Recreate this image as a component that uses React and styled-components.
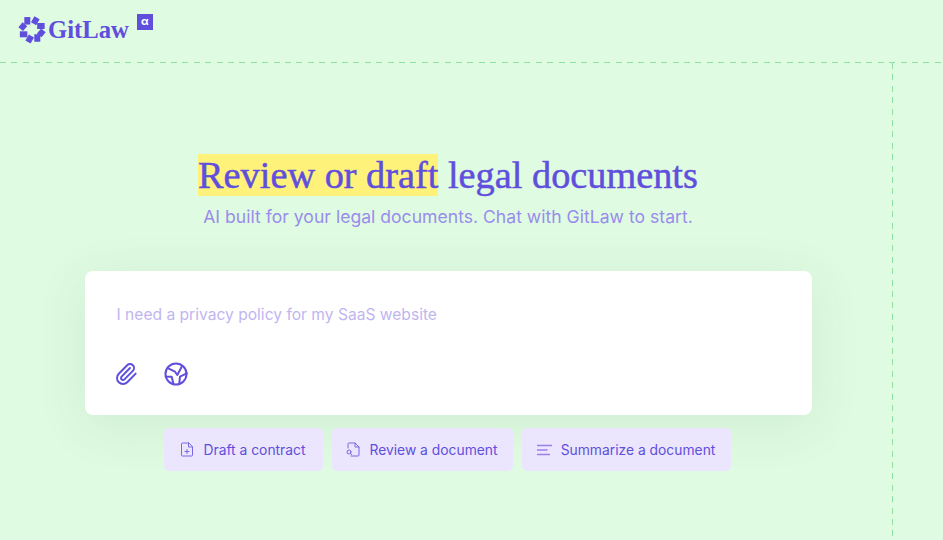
import styled, { createGlobalStyle } from "styled-components";

const GlobalStyle = createGlobalStyle`
  html, body {
    margin: 0;
    height: 100%;
    overflow: hidden;
    background: #dffbe2;
    font-family: "Inter", "Noto Sans", sans-serif;
  }
`;

const PURPLE = "#5f4fdc";

// blocks of the logo ring: centre, size, tilt
const BLOCKS = [
  [-4.7, -9.2, 6, 7.5, 0],
  [3.3, -9.2, 6, 7, 30],
  [8.9, -4, 7.5, 6, 0],
  [9.3, 2.9, 6, 6.5, 40],
  [5.3, 8, 6, 7.5, 0],
  [-2.3, 9, 6, 7, 30],
  [-8.4, 4.3, 7.5, 6, 0],
  [-9.2, -3.3, 6, 6.5, 40],
];

const LogoMark = () => (
  <svg width="28" height="28" viewBox="-14 -14 28 28" fill={PURPLE}>
    {BLOCKS.map(([x, y, w, h, r]) => (
      <rect key={`${x}${y}`} x={x - w / 2} y={y - h / 2} width={w} height={h} transform={`rotate(${r} ${x} ${y})`} />
    ))}
  </svg>
);

const ClipIcon = () => (
  <svg width="24" height="24" viewBox="0 0 24 24" fill="none" stroke={PURPLE} strokeWidth="2" strokeLinecap="round" strokeLinejoin="round">
    <path d="m16 6-8.414 8.586a2 2 0 0 0 2.829 2.829l8.414-8.586a4 4 0 1 0-5.657-5.657l-8.379 8.551a6 6 0 1 0 8.485 8.485l8.379-8.551" />
  </svg>
);

const GlobeIcon = () => (
  <svg width="24" height="24" viewBox="0 0 24 24" fill="none" stroke={PURPLE} strokeWidth="2" strokeLinecap="round" strokeLinejoin="round">
    <circle cx="12" cy="12" r="10.5" />
    <path d="M4.3 6.3 11 9.7l2.3 3.3 4.4-8.3" />
    <path d="M1.7 14.7h6l1.6 6.6" />
    <path d="m22.7 11.3-6.7 3.4-.7 6.6" />
  </svg>
);

const DraftIcon = () => (
  <svg width="14" height="15" viewBox="0 0 14 15" fill="none" stroke="#7868e4" strokeWidth="1" strokeLinecap="round" strokeLinejoin="round">
    <path d="M8.5 1H2.5a1 1 0 0 0-1 1v11a1 1 0 0 0 1 1h9a1 1 0 0 0 1-1V5z" />
    <path d="M8.5 1v4h4" />
    <path d="M7 7.5v4M5 9.5h4" />
  </svg>
);

const ReviewIcon = () => (
  <svg width="14" height="15" viewBox="0 0 14 15" fill="none" stroke="#7868e4" strokeWidth="1" strokeLinecap="round" strokeLinejoin="round">
    <path d="M2 6V2a1 1 0 0 1 1-1h6l4 4v8a1 1 0 0 1-1 1H5" />
    <path d="M9 1v4h4" />
    <circle cx="3" cy="10" r="2" />
    <path d="m4.5 11.5 1.2 1.2" />
  </svg>
);

const LinesIcon = () => (
  <svg width="15" height="12" viewBox="0 0 15 12" fill="none" stroke="#9a80ea" strokeWidth="1.4">
    <path d="M0 1.5h15M0 6h10.5M0 10.5h13" />
  </svg>
);

export default function App() {
  return (
    <>
      <GlobalStyle />
      <Page>
        <Header>
          <Logo>
            <LogoMark />
            <LogoText>GitLaw</LogoText>
            <Alpha>α</Alpha>
          </Logo>
        </Header>
        <Body>
          <Main>
            <Title>
              <Mark>Review or draft</Mark> legal documents
            </Title>
            <Subtitle>AI built for your legal documents. Chat with GitLaw to start.</Subtitle>
            <Card>
              <Prompt>I need a privacy policy for my SaaS website</Prompt>
              <Tools>
                <ClipIcon />
                <GlobeIcon />
              </Tools>
            </Card>
            <Chips>
              <Chip $width={159}><DraftIcon />Draft a contract</Chip>
              <Chip $width={181}><ReviewIcon />Review a document</Chip>
              <Chip $width={209}><LinesIcon />Summarize a document</Chip>
            </Chips>
          </Main>
        </Body>
      </Page>
    </>
  );
}

const Page = styled.div`
  display: flex;
  flex-direction: column;
  height: 540px;
  width: 943px;
  background: #dffbe2;
`;
const Header = styled.header`
  height: 63px;
  padding: 16px 0 0 18px;
  box-sizing: border-box;
  background: repeating-linear-gradient(90deg, #8fe0a2 0 6px, transparent 6px 11.4px) bottom left / 100% 1px no-repeat;
`;
const Logo = styled.div`
  display: flex;
  align-items: flex-start;
`;
const LogoText = styled.span`
  margin: 1px 0 0 2px;
  font-family: "Liberation Serif", serif;
  font-weight: 700;
  font-size: 24.7px;
  line-height: 26px;
  color: ${PURPLE};
`;
const Alpha = styled.span`
  width: 16px;
  height: 16px;
  margin: -2px 0 0 8px;
  background: ${PURPLE};
  color: #fff;
  font-size: 11px;
  font-weight: 700;
  line-height: 15px;
  text-align: center;
`;
const Body = styled.div`
  flex: 1;
  display: flex;
`;
const Main = styled.main`
  width: 893px;
  box-sizing: border-box;
  padding: 91px 0 0 3px;
  display: flex;
  flex-direction: column;
  align-items: center;
  background: repeating-linear-gradient(180deg, #8fe0a2 0 6px, transparent 6px 11.4px) top right / 1px 100% no-repeat;
`;
const Title = styled.h1`
  margin: 0;
  font-family: "Liberation Serif", serif;
  font-weight: 400;
  font-size: 38.3px;
  line-height: 42px;
  color: ${PURPLE};
  -webkit-text-stroke: 0.5px ${PURPLE};
`;
const Mark = styled.span`
  background: #fff27a;
`;
const Subtitle = styled.p`
  margin: 9px 0 0;
  font-size: 17.6px;
  line-height: 24px;
  color: #9a8ceb;
`;
const Card = styled.div`
  width: 727px;
  height: 144px;
  margin-top: 42px;
  box-sizing: border-box;
  padding: 34px 32px 0;
  background: #fff;
  border-radius: 8px;
  box-shadow: 0 10px 50px rgba(70, 120, 80, 0.1);
`;
const Prompt = styled.div`
  font-size: 15.6px;
  line-height: 20px;
  color: #bfb6f0;
`;
const Tools = styled.div`
  display: flex;
  gap: 26px;
  margin: 37px 0 0 -3px;
`;
const Chips = styled.div`
  display: flex;
  gap: 9px;
  margin: 13px 2px 0 0;
`;
const Chip = styled.button`
  display: flex;
  align-items: center;
  justify-content: center;
  gap: 9px;
  width: ${(p) => p.$width}px;
  height: 43px;
  padding: 0;
  border: 0;
  border-radius: 5px;
  background: #ebe6fd;
  color: ${PURPLE};
  font-family: inherit;
  font-size: 13.85px;
`;
